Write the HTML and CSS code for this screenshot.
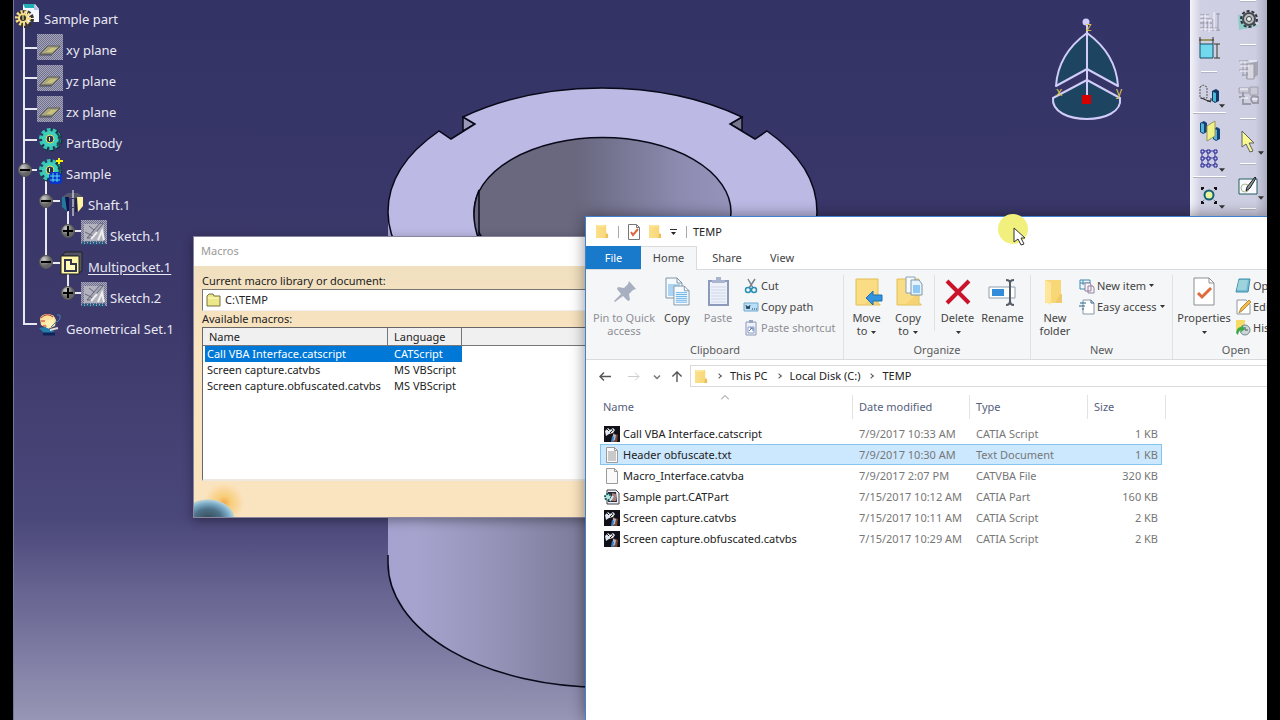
FILE: index.html
```html
<!DOCTYPE html>
<html lang="en">
<head>
<meta charset="utf-8">
<title>TEMP</title>
<link rel="stylesheet" href="styles.css">
</head>
<body>
<svg class="defs" width="0" height="0" aria-hidden="true">
  <defs>
    <pattern id="dither" width="2" height="2" patternUnits="userSpaceOnUse"><path fill="#a6a6ba" d="M0 0h1v1H0zM1 1h1v1H1z"/></pattern>
    <linearGradient id="fold"><stop offset="0" stop-color="#fbe08c"/><stop offset="1" stop-color="#f7d673"/></linearGradient>
    <radialGradient id="ball" cx=".35" cy=".3"><stop offset="0" stop-color="#ccc"/><stop offset="1" stop-color="#666"/></radialGradient>
  </defs>
  <symbol id="plane" viewBox="0 0 28 31"><path fill="#70708e" d="M0 0h26v26H0z"/><path fill="url(#dither)" d="M0 0h26v26H0z"/><path d="M3 20l8-8h12l-8 8z" fill="#a9a57c" stroke="#5c5c58"/><path d="M9 18l5-4h6l-5 4z" fill="#c9c37c"/><path d="M2 21h13" stroke="#4a4a50"/></symbol>
  <symbol id="gear" viewBox="0 0 28 31"><g fill="none"><circle cx="14" cy="13" r="9" stroke="#14353b" stroke-width="5" stroke-dasharray="3.5 2.1"/><circle cx="13" cy="12" r="9" stroke="#35c6b4" stroke-width="4" stroke-dasharray="3.5 2.1"/><circle cx="13" cy="12" r="6" stroke="#3ed0bb" stroke-width="4"/><circle cx="13" cy="12" r="4" stroke="#e9e45a" stroke-width="1"/><path d="M20 6a9 9 0 0 1 0 13" stroke="#174d55" stroke-width="2"/></g><circle cx="13" cy="12" r="3" fill="#24335e"/><path d="M12 10h1v4h-1z" fill="#ef6"/></symbol>
  <symbol id="sketch" viewBox="0 0 28 31"><path fill="#70708e" d="M0 0h26v24H0z"/><path fill="url(#dither)" d="M0 0h26v24H0z"/><path d="M3 4h20v17H3z" fill="#b2b3be"/><path d="M6 18L19 3l3 1-12 14zM8 6l5 4M4 12l8 4" stroke="#656579" fill="#a5a5b3"/><path d="M10 19l6-7M17 20l4-9 2 9" stroke="#eee" fill="none" stroke-width="2"/><path d="M1 23h24" stroke="#1f5a82" stroke-width="3" stroke-dasharray="2 1"/></symbol>
  <symbol id="folder" viewBox="0 0 14 16"><path fill="url(#fold)" d="M0 1h11v9l2 1v4H0z"/><path d="M11 10l2 1v4h-3z" fill="#e8c057"/><path d="M1 2h9" stroke="#fff0ae"/></symbol>
  <symbol id="bigfolder" viewBox="0 0 28 30"><path d="M1 2h22v25h2v1H1z" fill="#f9dc83" stroke="#e3be58"/><path d="M22 16v11H10z" fill="#f5d273"/></symbol>
  <symbol id="catia" viewBox="0 0 16 16"><path d="M0 0h16v16H0z" fill="#111018"/><path d="M9 7l5 2-1 7H8z" fill="#78452f"/><path d="M9 8l3 1-1 5-2 1z" fill="#a7b9d9"/><path d="M1 5l3-3 2 2 3-2 2 2-2 3-4 1-3 2z" fill="#e2e8ee"/><path d="M3 3l2 2M6 7l2-2M8 3l1 2" stroke="#222"/><path d="M8 10l2 1-1 5H7z" fill="#367ec2"/></symbol>
  <symbol id="page" viewBox="0 0 16 16"><path d="M2.500.500h8l3 3v12h-11z" fill="#fafafb" stroke="#9b9b9b"/><path d="M10.500.500v3h3" fill="none" stroke="#9b9b9b"/></symbol>
  <symbol id="drop" viewBox="0 0 5 3"><path d="M0 0h5L2.500 3z" fill="#333"/></symbol>
  <symbol id="bluedoc" viewBox="0 0 18 22"><path d="M1 1h11l5 5v15H1z" fill="#f5faff" stroke="#8096a8"/><path d="M12 1v5h5" fill="none" stroke="#8096a8"/><path d="M3 8h12M3 10h12M3 12h12M3 14h12M3 16h12M3 18h12" stroke="#62aee6"/></symbol>
</svg>

<main class="desktop">
  <svg class="scene" aria-label="3D view of a hollow shaft">
    <defs>
      <linearGradient id="side" gradientUnits="userSpaceOnUse" x1="388" y1="0" x2="610" y2="0"><stop offset="0" stop-color="#a4a2cf"/><stop offset=".12" stop-color="#a6a4ce"/><stop offset=".5" stop-color="#9492b6"/><stop offset="1" stop-color="#757492"/></linearGradient>
      <linearGradient id="hole" gradientUnits="userSpaceOnUse" x1="474" y1="0" x2="732" y2="0"><stop offset="0" stop-color="#69687f"/><stop offset=".4" stop-color="#69687f"/><stop offset=".8" stop-color="#8d8bb0"/><stop offset="1" stop-color="#9694bb"/></linearGradient>
    </defs>
    <g transform="translate(-14 0)">
      <path d="M388 212V563A214 124 0 0 0 817 563V212z" fill="url(#side)"/>
      <path d="M388 555V563A214 124 0 0 0 817 563" fill="none" stroke="#080818" stroke-width="1.500"/>
      <path d="M463 117v14l12-7z" fill="#9a98b8" stroke="#080818" stroke-width="1.500"/>
      <path d="M742 117v14l-12-7z" fill="#77768f" stroke="#080818" stroke-width="1.500"/>
      <path d="M463 117Q525 88 602 88Q680 88 742 117L730 124L755 139L767 131Q817 166 817 212A214 124 0 0 1 388 212Q388 166 439 131L451 139L475 124z" fill="#bcbae5" stroke="#080818" stroke-width="1.500"/>
      <ellipse cx="602.500" cy="212" rx="128.500" ry="74.500" fill="url(#hole)" stroke="#080818" stroke-width="1.500"/>
      <path d="M479 190V240Q469 214 479 190z" fill="#6a6980" stroke="#080818" stroke-width="1.500"/>
      <g fill="#1d4460" stroke="#d2ccf8" stroke-width="2" stroke-linejoin="round">
        <path d="M1087 33Q1058 54 1056 86L1087 69L1118 86Q1116 54 1087 33z"/>
        <path d="M1053 98L1087 80L1120 98C1124 126 1050 126 1053 98z"/>
        <path d="M1087 24V98"/>
      </g>
      <path d="M1082 95h9v9h-9z" fill="#d40000"/><circle cx="1086" cy="22" r="3.500" fill="#d2ccf8"/>
      <g class="axis"><text x="1086" y="31">z</text><text x="1056" y="96">x</text><text x="1116" y="96">y</text></g>
    </g>
  </svg>

  <nav class="tree" aria-label="Specification tree">
    <svg class="tree-lines" width="120" height="345" aria-hidden="true">
      <g transform="translate(-14 0)"><path d="M24 22V324H37M24 48H37M24 78H37M24 109H37M24 140H37M24 170H37M46 178V262M46 201H60M46 263H60M68 210V231H81M68 272V293H81" fill="none" stroke="#e8e8f2" stroke-width="2"/>
      <g fill="url(#ball)" stroke="#555"><circle cx="25" cy="170" r="6.500"/><circle cx="46" cy="201" r="6.500"/><circle cx="68" cy="231" r="6.500"/><circle cx="46" cy="262" r="6.500"/><circle cx="68" cy="293" r="6.500"/></g>
      <path d="M20 170h10M41 201h10M41 262h10M63 231h10M68 226v10M63 293h10M68 288v10" stroke="#000" stroke-width="2"/></g>
    </svg>
    <ul>
      <li class="root"><svg viewBox="0 0 28 31"><path d="M8 1h12l4 5v13H8z" fill="#f5f7ff"/><path d="M8 1h12v4H10z" fill="#21afb5"/><path d="M19 1v6h5z" fill="#b4c2e6"/><circle cx="10" cy="16" r="7" fill="none" stroke="#39342b" stroke-width="4" stroke-dasharray="3 1.400"/><circle cx="8" cy="15" r="6" fill="none" stroke="#f5dc86" stroke-width="4" stroke-dasharray="2 1.600"/><circle cx="8" cy="15" r="4" fill="#332f31" stroke="#f5dc86" stroke-width="2"/><path d="M8 12v5" stroke="#ff8"/></svg><span>Sample part</span></li>
      <li class="one"><svg><use href="#plane"/></svg><span>xy plane</span></li>
      <li class="one"><svg><use href="#plane"/></svg><span>yz plane</span></li>
      <li class="one"><svg><use href="#plane"/></svg><span>zx plane</span></li>
      <li class="one"><svg><use href="#gear"/></svg><span>PartBody</span></li>
      <li class="one"><svg><use href="#gear"/><path d="M14 14h8l3 3v8l-3 1h-8l-2-3v-6z" fill="#0b35c9"/><path d="M16 15v9M20 15v9M13 18h10M13 22h10" stroke="#55d8f2"/><path d="M22 0v6M19 3h7" stroke="#fff200" stroke-width="2"/></svg><span>Sample</span></li>
      <li class="two"><svg><path d="M3 8l6-4h10l5 4-5 1H9z" fill="#55566c"/><path d="M3 8h6v15l-6-5z" fill="#23799b"/><path d="M6 8h4v14H8z" fill="#10144d"/><path d="M18 8h6v9l-5 6z" fill="#fff5a1"/><path d="M14 1v26" stroke="#fff" stroke-dasharray="8 1"/><path d="M17 9v14" stroke="#111"/></svg><span>Shaft.1</span></li>
      <li class="three"><svg><use href="#sketch"/></svg><span>Sketch.1</span></li>
      <li class="two current"><svg><path d="M6 1h17v19l-5 3V5H3z" fill="#555467" stroke="#222"/><path d="M2 5h18v18H2z" fill="#fff7a4" stroke="#222"/><path d="M6 9h6v4h5v7H6z" fill="#fffbb8" stroke="#34344b" stroke-width="2"/></svg><span>Multipocket.1</span></li>
      <li class="three"><svg><use href="#sketch"/></svg><span>Sketch.2</span></li>
      <li class="one"><svg><path d="M3 6q1-5 8-5 6 0 8 6l-1 6-7 3-7-4z" fill="#fbe0a0"/><path d="M4 5q6-6 12-1M4 8h4M6 13h4" stroke="#bd3b24" fill="none"/><path d="M8 8l9-2-1 7-6 2z" fill="#fff1b4"/><path d="M2 15l6-1 10 5-10 2z" fill="#227eaa"/><path d="M20 2h3v4l-3 3M20 8l-6 6" fill="none" stroke="#3c84b8" stroke-width="1"/><path d="M6 21h12" stroke="#0f2259" stroke-width="3"/><path d="M13 17l8-2" stroke="#ddd" stroke-width="2"/></svg><span>Geometrical Set.1</span></li>
    </ul>
  </nav>

  <aside class="toolbar" aria-label="Sketcher tools">
    <div class="tools">
      <button aria-label="Constraints in dialog"><svg viewBox="0 0 26 27"><path d="M4 6h9M4 10h12M4 14h12M8 5v17M12 10v12M17 10v12M4 19h18" stroke="#8d8da0"/><path d="M4 7h9M4 11h12M9 5v17M13 11v12M18 3v16M4 20h18" stroke="#f5f5ff"/><path d="M22 4v18M20 5h4M20 21h4" stroke="#9999a8"/></svg></button>
      <button aria-label="Constraint"><svg viewBox="0 0 26 27"><path d="M4 8h13v14H4z" fill="#72d8ed" stroke="#174e66"/><path d="M3 4h15M4 1v7M17 1v7M21 8v14M18 8h6M18 22h6" stroke="#34342a"/><path d="M6 4h9" stroke="#b7a737"/></svg></button>
      <hr class="wide">
      <button aria-label="Mirror"><svg viewBox="0 0 26 27"><path d="M4 6l3-2 4 2v11H4z" fill="none" stroke="#555" stroke-dasharray="2 1"/><path d="M5 17l10 4M11 20h4v-3" stroke="#222" fill="none"/><path d="M16 10l4-2 3 2v10l-4 2-3-2z" fill="#123668"/><path d="M17 11l3 1v9l-3-1z" fill="#49b7d6"/></svg><svg class="corner"><use href="#drop"/></svg></button>
      <hr class="full">
      <button aria-label="Symmetry"><svg viewBox="0 0 26 27"><path d="M4 5l4-2 3 2v9l-4 2-3-2zM17 11l4-2 3 2v10l-4 2-3-2z" fill="#174276"/><path d="M5 5l3 1v9l-3-1zM18 11l3 1v10l-3-1z" fill="#53b5d6"/><path d="M11 8l8-5v15l-8 5z" fill="#f1f286" stroke="#99955b"/></svg></button>
      <button aria-label="Grid"><svg viewBox="0 0 26 27"><path d="M6 6h13M6 13h13M6 20h13M6 6v14M12 6v14M19 6v14" stroke="#3636a0"/><path d="M5 5h3v3H5zM11 5h3v3h-3zM18 5h3v3h-3zM5 12h3v3H5zM11 12h3v3h-3zM18 12h3v3h-3zM5 19h3v3H5zM11 19h3v3h-3zM18 19h3v3h-3z" fill="#c9c9f4" stroke="#21218c"/></svg><svg class="corner"><use href="#drop"/></svg></button>
      <hr class="full">
      <button aria-label="Construction point"><svg viewBox="0 0 26 27"><path d="M6 7l14 13M20 7L6 20" stroke="#777" stroke-dasharray="2 2"/><path d="M6 8V6h2M18 6h2v2M6 19v2h2M18 21h2v-2" fill="none" stroke="#111" stroke-width="2"/><circle cx="13" cy="13" r="4.500" fill="#e6f59d" stroke="#145f70" stroke-width="2"/></svg><svg class="corner"><use href="#drop"/></svg></button>
    </div>
    <div class="tools">
      <hr class="top">
      <button aria-label="Options"><svg viewBox="0 0 26 27"><path d="M3 7l20 12-19 4z" fill="#8eccca"/><path d="M14 15l10 1-5 3z" fill="#e4e4f0"/><circle cx="14" cy="12" r="8" fill="none" stroke="#303337" stroke-width="2" stroke-dasharray="3 2"/><circle cx="14" cy="12" r="6" fill="#b9bdc0" stroke="#444a4d" stroke-width="2"/><circle cx="14" cy="12" r="2.500" fill="#eee" stroke="#3c4144"/></svg></button>
      <hr class="wide">
      <button aria-label="Catalog"><svg viewBox="0 0 26 27"><path d="M13 8l10-3v14l-6 4h-6z" fill="#a6a6b2"/><path d="M12 8h7v15h-7z" fill="#d8d8e2" stroke="#9a9aa6"/><path d="M4 5h9M5 9h8M4 14h9M7 19h6M8 5v15M12 4v15" stroke="#9a9aa6"/><path d="M5 6h8M5 10h9M5 15h8M14 5h8" stroke="#f7f7ff"/></svg></button>
      <button aria-label="Publish"><svg viewBox="0 0 26 27"><path d="M4 5h10v5H4zM15 4h8v8h-8z" fill="#c8c8d6" stroke="#a0a0ac"/><path d="M4 14h6M8 9v13M8 21h8M18 13q-4 3 0 7h5v-6z" fill="none" stroke="#9a9aa6" stroke-width="2"/><path d="M5 6h8M6 15h7M17 16h6" stroke="#fff"/></svg></button>
      <hr class="mid">
      <button aria-label="Select"><svg viewBox="0 0 26 27"><path d="M7 3l12 12h-5l4 8-3 1-4-8-4 3z" fill="#fbf791" stroke="#5c6261"/></svg><svg class="corner"><use href="#drop"/></svg></button>
      <hr class="mid">
      <button aria-label="Sketch"><svg viewBox="0 0 26 27"><path d="M4 6h18v15H4z" fill="#fafaff" stroke="#235c62"/><circle cx="10" cy="15" r="4" fill="none" stroke="#a9b98e"/><path d="M20 4l-8 10-1 4 4-3 6-10z" fill="#8b9692" stroke="#181e25"/></svg><svg class="corner"><use href="#drop"/></svg></button>
      <hr class="mid">
    </div>
  </aside>

  <section class="window macros" aria-label="Macros">
    <header>Macros</header>
    <form class="macro-form">
      <label for="library">Current macro library or document:</label>
      <div class="field"><svg width="16" height="14" viewBox="0 0 16 14"><path d="M1 3l2-2h4l1 2h6v10H1z" fill="#ece88a" stroke="#77733c"/><path d="M2 5h11" stroke="#fffcc8"/></svg><input id="library" value="C:\TEMP"></div>
      <p id="available">Available macros:</p>
      <div class="macro-list">
        <table aria-labelledby="available">
          <colgroup><col class="macro-name"><col class="macro-lang"><col></colgroup>
          <thead><tr><th>Name</th><th>Language</th><th></th></tr></thead>
          <tbody>
            <tr class="chosen"><td>Call VBA Interface.catscript</td><td>CATScript</td><td></td></tr>
            <tr><td>Screen capture.catvbs</td><td>MS VBScript</td><td></td></tr>
            <tr><td>Screen capture.obfuscated.catvbs</td><td>MS VBScript</td><td></td></tr>
          </tbody>
        </table>
      </div>
      <div class="macro-foot"></div>
    </form>
  </section>

  <section class="window explorer" aria-label="TEMP">
    <header class="titlebar">
      <svg class="small-folder"><use href="#folder"/></svg><i></i>
      <svg class="check" viewBox="0 0 12 16"><path d="M.500.500h8l3 3v12H.500z" fill="#fff" stroke="#777"/><path d="M8.500.500v3h3" fill="none" stroke="#777"/><path d="M3 8l2 3 5-6" fill="none" stroke="#df6541" stroke-width="2"/></svg>
      <svg class="small-folder"><use href="#folder"/></svg>
      <svg class="customise" viewBox="0 0 7 6"><path d="M0 .500h7" stroke="#333"/><path d="M1 3h5L3.500 6z" fill="#222"/></svg><i></i>
      <span>TEMP</span>
    </header>
    <div class="tabs"><button class="file">File</button><button class="active">Home</button><button>Share</button><button>View</button></div>
    <div class="ribbon">
      <section class="group clipboard">
        <div class="commands">
          <button class="big" disabled><svg viewBox="0 0 32 32"><path d="M21 5l7 8-3 1-4 4 1 6-2 1-5-5-8 6-1-1 7-7-4-5 1-2 6 1 4-4z" fill="#a8afc1"/></svg>Pin to Quick<br>access</button>
          <button class="big"><svg viewBox="0 0 32 32"><svg x="4" y="1" width="18" height="22"><use href="#bluedoc"/></svg><svg x="12" y="9" width="17" height="21"><use href="#bluedoc"/></svg></svg>Copy</button>
          <button class="big" disabled><svg viewBox="0 0 32 32"><path d="M7 5h19v24H7z" fill="#edf1fa" stroke="#8d9abb" stroke-width="2"/><path d="M10 7V4h4V1h5v3h4v3z" fill="#a9b4ce"/><path d="M9 11h15M9 14h15M9 17h15M9 20h15M9 23h15M9 26h15" stroke="#cdd5e8"/></svg>Paste</button>
          <div class="stack">
            <button><svg viewBox="0 0 16 16"><path d="M5 1l5 9M12 1L6 10" stroke="#78838f" stroke-width="1.500"/><circle cx="5" cy="12" r="2.500" fill="none" stroke="#278fb3" stroke-width="1.500"/><circle cx="11" cy="12" r="2.500" fill="none" stroke="#278fb3" stroke-width="1.500"/></svg>Cut</button>
            <button><svg viewBox="0 0 16 16"><path d="M1 4h14v8H1z" fill="#b9e0f8" stroke="#72a9cd"/><path d="M3 6l1 4 1-3 1 3 1-4M9 10h1M11 10h1M13 10h1" fill="none" stroke="#223b55"/></svg>Copy path</button>
            <button disabled><svg viewBox="0 0 16 16"><path d="M3 2h10v13H3z" fill="#eef1f8" stroke="#8c98b7"/><path d="M6 0h4v3H6z" fill="#9aa5bf"/><path d="M5 7h6v6H5z" fill="#fff" stroke="#8aa0c9"/><path d="M6 11l3-3M7 8h3v3" stroke="#5575af" fill="none"/></svg>Paste shortcut</button>
          </div>
        </div><h2>Clipboard</h2>
      </section>
      <section class="group organize">
        <div class="commands">
          <button class="big"><svg viewBox="0 0 32 32"><svg x="4" y="1" width="28" height="30"><use href="#bigfolder"/></svg><path d="M15 22l7-7v4h9v6h-9v4z" fill="#3493df" stroke="#2170ae"/></svg>Move<br>to <svg class="drop"><use href="#drop"/></svg></button>
          <button class="big"><svg viewBox="0 0 32 32"><svg x="4" y="1" width="28" height="30"><use href="#bigfolder"/></svg><path d="M14 1h9v16h-9z" fill="#f7fbff" stroke="#8aa3b8"/><path d="M19 4h8l3 4v11H19z" fill="#e6f4fe" stroke="#8096a8"/><path d="M21 9h7v8h-7z" fill="#8fc8f3"/></svg>Copy<br>to <svg class="drop"><use href="#drop"/></svg></button>
          <i class="rule"></i>
          <button class="big"><svg viewBox="0 0 32 32"><path d="M5 5l22 22M27 5L5 27" stroke="#c9142c" stroke-width="4"/></svg>Delete<br><svg class="drop"><use href="#drop"/></svg></button>
          <button class="big"><svg viewBox="0 0 32 32"><path d="M2 11h26v11H2z" fill="#fff" stroke="#8e9eae"/><path d="M5 13h12v7H5z" fill="#338cd9"/><path d="M19 4q4 0 4 3v18q0 4-4 4M27 4q-4 0-4 3v18q0 4 4 4" fill="none" stroke="#555d66" stroke-width="2"/></svg>Rename</button>
        </div><h2>Organize</h2>
      </section>
      <section class="group new">
        <div class="commands">
          <button class="big"><svg viewBox="0 0 32 32"><path d="M6 4h16v16l1 7H6z" fill="#f8d777"/><path d="M6 4l6 3v22l-6-3z" fill="#ffe69a"/><path d="M21 18h2v9h-7z" fill="#efca6c"/></svg>New<br>folder</button>
          <div class="stack">
            <button><svg viewBox="0 0 16 16"><path d="M1 2h10v9H1zM4 2v5M1 5h10" fill="#edf8ff" stroke="#4388ad"/><path d="M6 5h5l1 2v6H6zM9 8h5l1 2v5H9z" fill="#f3f4fa" stroke="#94819b"/></svg>New item <svg class="drop"><use href="#drop"/></svg></button>
            <button><svg viewBox="0 0 16 16"><path d="M4 1h8l3 3v11H4z" fill="#fff" stroke="#8898a5"/><path d="M12 1v3h3M0 7h6M1 4h6M3 10h2" fill="none" stroke="#28658a"/></svg>Easy access <svg class="drop"><use href="#drop"/></svg></button>
          </div>
        </div><h2>New</h2>
      </section>
      <section class="group open">
        <div class="commands">
          <button class="big"><svg viewBox="0 0 32 32"><path d="M6 2h15l5 5v22H6z" fill="#fff" stroke="#8e8e94"/><path d="M21 2v5h5" fill="none" stroke="#8e8e94"/><path d="M10 17l4 4 9-9" fill="none" stroke="#df6b3c" stroke-width="3"/></svg>Properties<br><svg class="drop"><use href="#drop"/></svg></button>
          <div class="stack">
            <button><svg viewBox="0 0 16 16"><path d="M4 1h11l-2 13H1z" fill="#75bcd2" stroke="#3f8eae"/><path d="M4 2h9l-2 10H2z" fill="#9dd3dd"/></svg>Open</button>
            <button><svg viewBox="0 0 16 16"><path d="M2 1h9l4 4v10H2z" fill="#fff" stroke="#8f98a0"/><path d="M4 14l2-5 8-8 2 2-8 8z" fill="#f1bd4b" stroke="#b88b37"/></svg>Edit</button>
            <button><svg viewBox="0 0 16 16"><path d="M1 0h9v11H1z" fill="#f7db67"/><circle cx="10" cy="10" r="5" fill="#cad7d8" stroke="#73878b"/><path d="M10 7v3h3" fill="none" stroke="#555"/><path d="M1 13q1-7 6-6V5l3 4-4 3V10q-2 0-3 5z" fill="#3baa48"/></svg>History</button>
          </div>
        </div><h2>Open</h2>
      </section>
    </div>
    <nav class="location" aria-label="Location">
      <button aria-label="Back"><svg viewBox="0 0 12 10"><path d="M12 5H1M5 1L1 5l4 4" fill="none" stroke="#555" stroke-width="1.500"/></svg></button>
      <button aria-label="Forward"><svg viewBox="0 0 12 10"><path d="M0 5h11M7 1l4 4-4 4" fill="none" stroke="#ccc"/></svg></button>
      <button class="recent" aria-label="Recent locations"><svg viewBox="0 0 12 10"><path d="M3 4l3 3 3-3" fill="none" stroke="#777" stroke-width="1.500"/></svg></button>
      <button class="up" aria-label="Up"><svg viewBox="0 0 12 12"><path d="M6 12V1M1 6l5-5 5 5" fill="none" stroke="#555" stroke-width="1.500"/></svg></button>
      <div class="address"><svg class="small-folder"><use href="#folder"/></svg><b></b><button>This PC</button><b></b><button>Local Disk (C:)</button><b></b><button>TEMP</button></div>
    </nav>
    <table class="files">
      <colgroup><col><col class="date"><col class="type"><col class="size"></colgroup>
      <thead><tr><th><svg class="sort" viewBox="0 0 8 5"><path d="M0 4.500l4-4 4 4" fill="none" stroke="#888"/></svg>Name</th><th>Date modified</th><th>Type</th><th>Size</th></tr></thead>
      <tbody>
        <tr><td><span><svg><use href="#catia"/></svg>Call VBA Interface.catscript</span></td><td>7/9/2017 10:33 AM</td><td>CATIA Script</td><td>1 KB</td></tr>
        <tr class="selected"><td><span><svg><use href="#page"/><path d="M4 5h8M4 7h8M4 9h8M4 11h8M4 13h8" stroke="#999"/></svg>Header obfuscate.txt</span></td><td>7/9/2017 10:30 AM</td><td>Text Document</td><td>1 KB</td></tr>
        <tr><td><span><svg><use href="#page"/></svg>Macro_Interface.catvba</span></td><td>7/9/2017 2:07 PM</td><td>CATVBA File</td><td>320 KB</td></tr>
        <tr><td><span><svg><path d="M3 1h9l3 3v11H3z" fill="#eef" stroke="#444"/><path d="M4 3h8l1 10H4z" fill="#292833"/><path d="M8 4l4 1v7H8z" fill="#a97f78"/><circle cx="4" cy="8" r="3" fill="#bde5df" stroke="#195e69" stroke-width="2" stroke-dasharray="2 1"/><path d="M6 12l3-5" stroke="#d3e9f5" stroke-width="2"/></svg>Sample part.CATPart</span></td><td>7/15/2017 10:12 AM</td><td>CATIA Part</td><td>160 KB</td></tr>
        <tr><td><span><svg><use href="#catia"/></svg>Screen capture.catvbs</span></td><td>7/15/2017 10:11 AM</td><td>CATIA Script</td><td>2 KB</td></tr>
        <tr><td><span><svg><use href="#catia"/></svg>Screen capture.obfuscated.catvbs</span></td><td>7/15/2017 10:29 AM</td><td>CATIA Script</td><td>2 KB</td></tr>
      </tbody>
    </table>
  </section>
  <svg class="pointer" width="40" height="40" viewBox="0 0 40 40" aria-hidden="true"><circle cx="17" cy="15" r="15" fill="#f2f07c"/><path d="M18 14v14l4-3 3 6 3-1-3-6h4z" fill="#fff" stroke="#333"/></svg>
</main>
</body>
</html>
```
FILE: styles.css
```css
* { box-sizing: border-box; }
body {
  margin: 0;
  background: #000;
  color: #222;
  font: 11px/16px "Noto Sans", "Open Sans", sans-serif;
}
button, input { font: inherit; color: inherit; background: none; border: 0; padding: 0; margin: 0; }
ul, p, h2, hr { margin: 0; padding: 0; list-style: none; font-size: inherit; font-weight: normal; }
svg { flex: none; }
table { border-collapse: separate; border-spacing: 0; table-layout: fixed; }
th, td { font-weight: normal; text-align: left; white-space: nowrap; padding: 0; }
.defs { position: absolute; }

.desktop {
  position: relative;
  display: flex;
  justify-content: space-between;
  height: 100vh;
  margin: 0 13px;
  border-left: 1px solid #77779a;
  overflow: hidden;
  background: linear-gradient(#333366, #3d396b 45%, #4a477a 72%, #716f99 86%, #9896b5);
}
.scene { position: absolute; inset: 0; width: 100%; height: 100%; }
.axis { fill: #d8c64c; font-size: 12px; }

/* Specification tree */
.tree { position: relative; padding-top: 3px; color: #e8e8f2; font-size: 13px; }
.tree-lines { position: absolute; top: 0; left: 0; }
.tree ul { position: relative; }
.tree li { display: flex; align-items: center; gap: 1px; height: 31px; }
.tree li svg { width: 28px; height: 31px; }
.tree .root { padding-left: 1px; }
.tree .one { padding-left: 23px; }
.tree .two { padding-left: 45px; }
.tree .three { padding-left: 67px; }
.current span { text-decoration: underline; text-underline-offset: 2px; }

/* Tool palette */
.toolbar {
  position: relative;
  display: grid;
  grid-template-columns: 1fr 1fr;
  width: 77px;
  background: linear-gradient(90deg, #f3f3fa, #d0d0e4 14%, #cecee2 85%, #aeaec2);
}
.tools { display: flex; flex-direction: column; align-items: center; }
.tools:first-child { padding-top: 9px; }
.tools button { position: relative; height: 27px; width: 30px; flex: none; }
.tools button > svg:first-child { width: 26px; height: 27px; }
.tools .corner { position: absolute; right: -1px; bottom: 0; width: 6px; height: 4px; }
hr { flex: none; width: 16px; border: 0; background: linear-gradient(#fff 50%, #b4b4c6 50%) center / 100% 2px no-repeat; }
.wide { height: 18px; }
.full { height: 10px; width: 33px; }
.mid { height: 18px; }
.top { height: 7px; background-position: top; }
.tools:last-child .wide { height: 22px; }

.window { position: absolute; background: #fff; }

/* Macros dialog */
.macros {
  left: 179px;
  right: 200px;
  top: 236px;
  border: 1px solid #8a86a0;
  box-shadow: 0 3px 10px rgba(0, 0, 0, .35);
}
.macros header { height: 29px; padding: 6px 7px; color: #999; }
.macro-form { padding: 7px 0 0 8px; background: linear-gradient(#f0e0c0, #fae3bf 30%); }
.macro-form label { display: block; height: 16px; }
.macro-form p { height: 16px; }
.field {
  display: flex; align-items: center; gap: 3px;
  height: 22px; padding-left: 3px;
  background: #fff; border: 1px solid #777; border-bottom-color: #eee;
}
.field input { flex: 1; }
.macro-list { height: 154px; background: #fff; border: solid #666; border-width: 1px 0 0 1px; border-bottom: 2px solid #eee8e0; }
.macro-list table { width: 100%; }
.macro-name { width: 185px; }
.macro-lang { width: 74px; }
.macro-list th { height: 18px; padding-left: 6px; background: #f0f0f0; border: solid #777; border-width: 0 1px 1px 0; }
.macro-list td { height: 16px; padding-left: 4px; }
.macro-list td + td, .macro-list th + th { padding-left: 6px; }
.chosen td:not(:last-child) { background: #0078d7; color: #fff; }
.chosen td:first-child { box-shadow: inset 2px 0 #fff; }
.macro-foot {
  height: 36px; margin-left: -8px;
  background:
    radial-gradient(ellipse 27px 20px at 14px 38px, #344956, #4d7188 50%, #7fb0cc 80%, #bcd3d4 96%, transparent),
    radial-gradient(circle at 30px 22px, #f3a84a, #f8ce7c 7px, transparent 20px);
}

/* File explorer */
.explorer {
  left: 571px;
  right: 0;
  top: 216px;
  bottom: 0;
  overflow: hidden;
  border: solid #3f82cf;
  border-width: 1px 0 0 1px;
  box-shadow: 0 0 14px rgba(0, 0, 0, .45);
}
.titlebar { display: flex; align-items: center; height: 29px; padding-left: 10px; gap: 9px; }
.titlebar i { width: 1px; height: 12px; background: #aaa; }
.small-folder { width: 13px; height: 15px; }
.check { width: 12px; height: 16px; }
.customise { width: 7px; height: 6px; margin-left: -1px; }
.titlebar span { margin-left: -3px; }
.tabs { display: flex; height: 23px; }
.tabs button { width: 56px; color: #444; }
.tabs .file { width: 55px; background: #1979ca; color: #fff; }
.tabs .active { position: relative; background: #f5f6f7; border: solid #dadbdc; border-width: 1px 1px 0 0; height: 24px; padding-bottom: 2px; }
.tabs button:nth-child(3) { width: 60px; }
.tabs button:nth-child(4) { width: 50px; }
.ribbon { display: flex; height: 91px; padding-top: 5px; background: #f5f6f7; border: solid #dadbdc; border-width: 1px 0; color: #444; }
.group { flex: none; display: flex; flex-direction: column; height: 84px; border-right: 1px solid #e0e1e3; }
.commands { display: flex; height: 66px; }
.group h2 { text-align: center; line-height: 18px; color: #5a5a5a; }
.clipboard { width: 258px; padding-left: 1px; }
.organize { width: 187px; }
.new { width: 142px; }
.open { width: 127px; }
.big { flex: none; display: block; line-height: 13px; white-space: nowrap; align-self: flex-start; }
.big > svg:first-child { display: block; width: 32px; height: 32px; margin: 1px auto 3px; }
.big, .stack button { color: #444; }
.big:disabled, .stack button:disabled { color: #8e8e96; }
.clipboard .big:nth-child(1) { width: 74px; }
.clipboard .big:nth-child(2) { width: 32px; }
.clipboard .big:nth-child(3) { width: 50px; }
.organize .big { width: 45px; }
.organize .big:nth-child(2) { width: 38px; }
.rule { width: 1px; height: 56px; margin-left: 7px; background: #e0e1e3; }
.new .big { width: 48px; }
.open .big { width: 62px; }
.stack button { display: flex; align-items: center; gap: 2px; height: 21px; white-space: nowrap; }
.stack button > svg:first-child { width: 16px; height: 16px; }
.drop, .stack .drop { display: inline-block; width: 5px; height: 3px; vertical-align: middle; margin-left: 1px; }

.location { display: flex; align-items: center; height: 32px; padding-left: 13px; }
.location > button { width: 29px; height: 20px; text-align: left; }
.location > button svg { display: block; width: 12px; height: 11px; }
.location > .recent { width: 15px; margin-left: -6px; }
.location > .up { width: 19px; margin-left: 5px; }
.address { flex: 1; display: flex; align-items: center; gap: 9px; height: 22px; padding-left: 4px; border: 1px solid #d9d9d9; border-right: 0; white-space: nowrap; }
.address b { width: 4px; height: 4px; border: solid #555; border-width: 1px 1px 0 0; transform: rotate(45deg); }

.files { width: 562px; margin: 3px 0 0 14px; color: #777; }
.date { width: 117px; }
.type { width: 118px; }
.size { width: 75px; }
.files th { position: relative; height: 24px; padding-left: 6px; color: #56607c; border-left: 1px solid #e3e3e3; }
.files th:first-child { border-left: 0; padding-left: 3px; }
.files th:last-child::after { content: ""; position: absolute; right: -4px; top: 0; width: 1px; height: 24px; background: #e3e3e3; }
.files thead::after { content: ""; display: block; height: 4px; }
.sort { position: absolute; left: 121px; top: 0; width: 8px; height: 5px; }
.files td { height: 21px; padding-left: 7px; border: 0 solid #84c4ef; }
.files td:first-child { padding-left: 4px; color: #222; }
.files td:last-child { text-align: right; padding-right: 4px; }
.files td span { display: flex; align-items: center; gap: 3px; }
.files td svg { width: 16px; height: 16px; }
.selected td { background: #cce8ff; border-width: 1px 0; }
.selected td:first-child { border-left-width: 1px; padding-left: 3px; }
.selected td:last-child { border-right-width: 1px; padding-right: 3px; }

.pointer { position: absolute; left: 982px; top: 214px; }
```
